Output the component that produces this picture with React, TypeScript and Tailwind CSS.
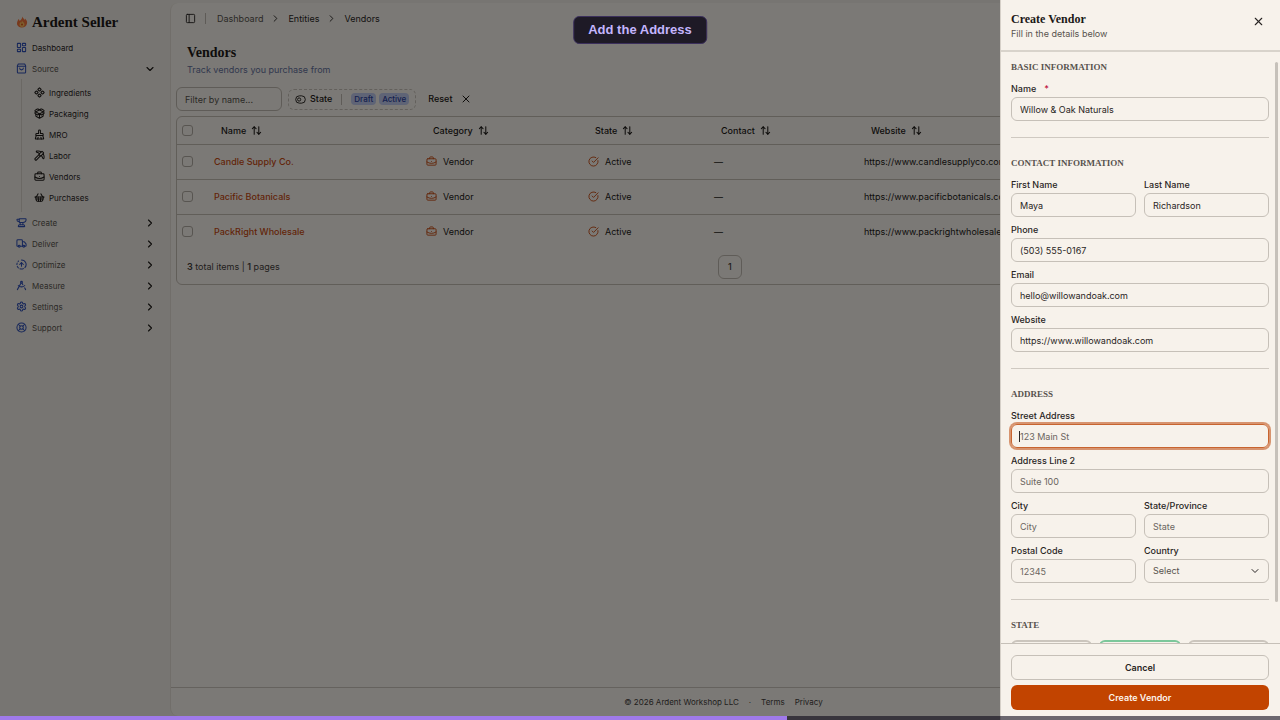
import type { ReactNode } from "react";
import {
  Anvil,
  ArrowUpDown,
  BriefcaseBusiness,
  BrushCleaning,
  ChevronDown,
  ChevronRight,
  CircleCheckBig,
  CircleFadingArrowUp,
  Component,
  DraftingCompass,
  LayoutDashboard,
  LifeBuoy,
  PackageOpen,
  PanelLeft,
  Pickaxe,
  Settings,
  ShoppingBasket,
  Truck,
  X,
  type LucideIcon,
} from "lucide-react";

interface NavItem {
  label: string;
  icon: LucideIcon;
}

interface Vendor {
  name: string;
  website: string;
}

const sourceItems: NavItem[] = [
  { label: "Ingredients", icon: Component },
  { label: "Packaging", icon: PackageOpen },
  { label: "MRO", icon: BrushCleaning },
  { label: "Labor", icon: Pickaxe },
  { label: "Vendors", icon: BriefcaseBusiness },
  { label: "Purchases", icon: ShoppingBasket },
];

const groups: NavItem[] = [
  { label: "Create", icon: Anvil },
  { label: "Deliver", icon: Truck },
  { label: "Optimize", icon: CircleFadingArrowUp },
  { label: "Measure", icon: DraftingCompass },
  { label: "Settings", icon: Settings },
  { label: "Support", icon: LifeBuoy },
];

const vendors: Vendor[] = [
  { name: "Candle Supply Co.", website: "https://www.candlesupplyco.com" },
  { name: "Pacific Botanicals", website: "https://www.pacificbotanicals.com" },
  { name: "PackRight Wholesale", website: "https://www.packrightwholesale.com" },
];

const columns = ["Name", "Category", "State", "Contact", "Website"];

const serif = "font-['Liberation_Serif',serif] font-bold";

function Flame() {
  return (
    <svg viewBox="0 0 24 24" className="size-3">
      <path
        d="M13 1c1 4 3 4 4 7 1-1 1-2 1-3 3 3 5 6 4 10-1 5-5 8-10 8S2 20 2 15c0-4 2-6 3-9 1 1 2 2 2 4 3-2 5-5 6-9z"
        fill="#f0733a"
      />
      <path
        d="M12 9c1 3 5 4 5 8 0 3-2 5-5 5s-5-2-5-5c0-2 1-3 2-5 1 1 1 1 1 2 1-1 2-3 2-5z"
        fill="#fbbf5a"
      />
      <circle cx="12" cy="17" r="2" fill="#d9541e" />
    </svg>
  );
}

function BagIcon() {
  return (
    <svg
      viewBox="0 0 24 24"
      className="size-[11px] text-[#2f4fb5]"
      fill="none"
      stroke="currentColor"
      strokeWidth="2.25"
      strokeLinecap="round"
      strokeLinejoin="round"
    >
      <path d="M5 2h14l2 4v14a2 2 0 0 1-2 2H5a2 2 0 0 1-2-2V6z" />
      <path d="M3 7h18" />
      <path d="M16 11a4 4 0 0 1-8 0" />
    </svg>
  );
}

function ToggleIcon() {
  return (
    <svg
      viewBox="0 0 24 24"
      className="size-[11px]"
      fill="none"
      stroke="currentColor"
      strokeWidth="2"
    >
      <rect x="1.5" y="4" width="21" height="16" rx="8" />
      <circle cx="9" cy="12" r="3.5" />
    </svg>
  );
}

function Sidebar() {
  return (
    <aside className="w-[170px] shrink-0 pt-3 pr-[14px] pl-4 text-[8px] text-[#57534e]">
      <a href="#" className={`flex h-5 items-center gap-1 text-[15px] text-[#1c1917] ${serif}`}>
        <Flame />
        Ardent Seller
      </a>
      <nav className="pt-[5px]">
        <a href="#" className="flex h-[21px] items-center gap-[5px] text-[#292524]">
          <LayoutDashboard strokeWidth={2.25} className="size-[11px] text-[#2f4fb5]" />
          Dashboard
        </a>
        <button className="flex h-[21px] w-full items-center gap-[5px]">
          <BagIcon />
          Source
          <ChevronDown strokeWidth={2.25} className="ml-auto size-3 text-[#1c1917]" />
        </button>
        <ul className="ml-[5px] border-l border-[#d6d0c8] pt-[3px] pb-1 pl-3">
          {sourceItems.map(({ label, icon: Icon }) => (
            <li key={label}>
              <a href="#" className="flex h-[21px] items-center gap-1 text-[#292524]">
                <Icon strokeWidth={2.25} className="size-[11px] text-[#1c1917]" />
                {label}
              </a>
            </li>
          ))}
        </ul>
        {groups.map(({ label, icon: Icon }) => (
          <button key={label} className="flex h-[21px] w-full items-center gap-[5px]">
            <Icon strokeWidth={2.25} className="size-[11px] text-[#2f4fb5]" />
            {label}
            <ChevronRight strokeWidth={2.25} className="ml-auto size-3 text-[#1c1917]" />
          </button>
        ))}
      </nav>
    </aside>
  );
}

function TopBar() {
  return (
    <header className="flex h-[31px] items-center px-[14px] text-[9px] text-[#292524]">
      <button aria-label="Toggle sidebar">
        <PanelLeft className="size-[11px]" />
      </button>
      <span className="ml-[9px] h-[11px] w-px bg-[#bdb7ae]" />
      <nav aria-label="Breadcrumb" className="ml-[11px] flex items-center gap-[7px]">
        <a href="#" className="text-[#57534e]">Dashboard</a>
        <ChevronRight className="size-[11px]" />
        <a href="#">Entities</a>
        <ChevronRight className="size-[11px]" />
        <span>Vendors</span>
      </nav>
    </header>
  );
}

function Filters() {
  return (
    <div className="flex h-6 items-center">
      <input
        aria-label="Filter by name"
        placeholder="Filter by name..."
        className="h-6 w-[106px] rounded-md border border-[#bfb9b0] px-2 text-[9px] placeholder:text-[#57534e]"
      />
      <button className="ml-[6px] flex h-[21px] items-center rounded-md border border-dashed border-[#c6c0b8] px-[6px] text-[9px] font-medium">
        <ToggleIcon />
        <span className="ml-1">State</span>
        <span className="mx-[9px] h-[11px] w-px bg-[#bfb9b0]" />
        <span className="flex gap-[3px] text-[8px] text-[#2a3f9c]">
          <span className="rounded-sm bg-[#bfc8ec] px-[3px]">Draft</span>
          <span className="rounded-sm bg-[#bfc8ec] px-[3px]">Active</span>
        </span>
      </button>
      <button className="ml-3 flex items-center gap-2 text-[9px] font-medium">
        Reset
        <X className="size-3" />
      </button>
    </div>
  );
}

function CheckCell({ label }: { label: string }) {
  return (
    <input
      type="checkbox"
      aria-label={label}
      className="block size-[11px] appearance-none rounded-[3px] border border-[#b0aaa2]"
    />
  );
}

function VendorTable() {
  return (
    <div className="mt-[5px] overflow-hidden rounded-md border border-[#c2bcb3]">
      <table className="w-full table-fixed text-left text-[9px]">
        <colgroup>
          <col className="w-8" />
          <col className="w-[212px]" />
          <col className="w-[162px]" />
          <col className="w-[126px]" />
          <col className="w-[150px]" />
          <col />
        </colgroup>
        <thead>
          <tr className="h-[27px] border-b border-[#c2bcb3]">
            <th className="px-[5px]">
              <CheckCell label="Select all" />
            </th>
            {columns.map(c => (
              <th key={c} className="px-3 font-medium">
                <button className="flex items-center gap-[5px]">
                  {c}
                  <ArrowUpDown strokeWidth={2.25} className="size-[11px]" />
                </button>
              </th>
            ))}
          </tr>
        </thead>
        <tbody>
          {vendors.map(v => (
            <tr key={v.name} className="h-[35px] border-b border-[#c2bcb3] last:border-b-0">
              <td className="px-[5px]">
                <CheckCell label={`Select ${v.name}`} />
              </td>
              <td className="px-[5px]">
                <a href="#" className="font-medium text-[#c64a12]">{v.name}</a>
              </td>
              <td className="px-[5px]">
                <span className="flex items-center gap-[6px]">
                  <BriefcaseBusiness className="size-[11px] text-[#c64a12]" />
                  Vendor
                </span>
              </td>
              <td className="px-[5px]">
                <span className="flex items-center gap-[6px]">
                  <CircleCheckBig className="size-[11px] text-[#c64a12]" />
                  Active
                </span>
              </td>
              <td className="px-[5px]">—</td>
              <td className="px-[5px] whitespace-nowrap">{v.website}</td>
            </tr>
          ))}
        </tbody>
      </table>
      <div className="flex h-[35px] items-center justify-between px-[10px] text-[9px] text-[#44403c]">
        <p>
          <b className="font-semibold">3</b> total items | <b className="font-semibold">1</b> pages
        </p>
        <button className="size-6 rounded-md border border-[#bfb9b0] font-medium">1</button>
        <div className="w-20" />
      </div>
    </div>
  );
}

function Field({ id, label, value, placeholder, required, focused }: {
  id: string;
  label: string;
  value?: string;
  placeholder?: string;
  required?: boolean;
  focused?: boolean;
}) {
  return (
    <div className="flex min-w-0 flex-1 flex-col gap-[2px]">
      <label htmlFor={id} className="text-[9px] leading-[13px] font-medium">
        {label}
        {required && <span className="ml-2 text-[#be123c]">*</span>}
      </label>
      <div className="relative">
        <input
          id={id}
          defaultValue={value}
          placeholder={placeholder}
          autoFocus={focused}
          className="block h-6 w-full rounded-md border border-[#c6c0b8] px-2 text-[9px] caret-transparent outline-none placeholder:text-[#6b6560] focus:border-[#c8642f] focus:ring-2 focus:ring-[#c2551c]/60"
        />
        {/* steady caret, the native one blinks */}
        {focused && <span className="absolute top-[7px] left-2 h-[11px] w-px bg-[#292524]" />}
      </div>
    </div>
  );
}

function Section({ title, children }: { title: string; children?: ReactNode }) {
  return (
    <section className="border-b border-[#cfc9c1] pt-[18px] pb-4 first:pt-2 last:border-b-0">
      <h3 className={`mb-2 text-[9px] leading-[14px] text-[#57534e] uppercase ${serif}`}>{title}</h3>
      <div className="flex flex-col gap-[6px]">{children}</div>
    </section>
  );
}

function CreateVendorPanel() {
  return (
    <div
      role="dialog"
      aria-labelledby="panel-title"
      className="fixed inset-y-0 right-0 flex w-[280px] flex-col border-l border-[#d6d0c8] bg-[#f7f2eb] text-[#292524]"
    >
      <div className="flex h-[52px] shrink-0 items-start justify-between border-b-2 border-[#d8d3cb] pt-3 pr-[11px] pl-[10px]">
        <div>
          <h2 id="panel-title" className={`text-[12px] leading-[14px] text-[#1c1917] ${serif}`}>Create Vendor</h2>
          <p className="text-[9px] leading-[15px] text-[#57534e]">Fill in the details below</p>
        </div>
        <button aria-label="Close" className="mt-[3px] mr-1">
          <X className="size-[13px]" />
        </button>
      </div>

      <form className="relative min-h-0 flex-1 overflow-hidden pr-[11px] pl-[10px]">
        <Section title="Basic Information">
          <Field id="name" label="Name" value="Willow & Oak Naturals" required />
        </Section>
        <Section title="Contact Information">
          <div className="flex gap-2">
            <Field id="first" label="First Name" value="Maya" />
            <Field id="last" label="Last Name" value="Richardson" />
          </div>
          <Field id="phone" label="Phone" value="(503) 555-0167" />
          <Field id="email" label="Email" value="hello@willowandoak.com" />
          <Field id="website" label="Website" value="https://www.willowandoak.com" />
        </Section>
        <Section title="Address">
          <Field id="street" label="Street Address" placeholder="123 Main St" focused />
          <Field id="line2" label="Address Line 2" placeholder="Suite 100" />
          <div className="flex gap-2">
            <Field id="city" label="City" placeholder="City" />
            <Field id="province" label="State/Province" placeholder="State" />
          </div>
          <div className="flex gap-2">
            <Field id="postal" label="Postal Code" placeholder="12345" />
            <div className="flex min-w-0 flex-1 flex-col gap-[2px]">
              <label htmlFor="country" className="text-[9px] leading-[13px] font-medium">Country</label>
              <div className="relative">
                <select
                  id="country"
                  className="block h-6 w-full appearance-none rounded-md border border-[#c6c0b8] px-2 text-[9px] text-[#57534e]"
                >
                  <option>Select</option>
                </select>
                <ChevronDown className="pointer-events-none absolute top-[6px] right-2 size-3" />
              </div>
            </div>
          </div>
        </Section>
        <Section title="State">
          <div className="grid grid-cols-3 gap-[7px]">
            <button type="button" aria-label="Draft" className="h-6 rounded-md border-2 border-[#cbc5bd]" />
            <button type="button" aria-label="Active" className="h-6 rounded-md border-2 border-[#7cc79b]" />
            <button type="button" aria-label="Archived" className="h-6 rounded-md border-2 border-[#cbc5bd]" />
          </div>
        </Section>
        {/* scrollbar thumb */}
        <span className="absolute top-[10px] right-[2px] h-[540px] w-[3px] rounded-full bg-[#c6c1ba]" />
      </form>

      <div className="flex shrink-0 flex-col gap-[5px] border-t border-[#c6c0b8] pt-[11px] pr-[11px] pb-[10px] pl-[10px] text-[9px]">
        <button className="h-[25px] rounded-md border border-[#c6c0b8] font-semibold">Cancel</button>
        <button className="h-[25px] rounded-md bg-[#c24400] font-semibold text-[#fdf3ea]">Create Vendor</button>
      </div>
    </div>
  );
}

export default function App() {
  return (
    <div className="min-h-screen bg-[#efebe4] font-['Inter',sans-serif] text-[#1c1917]">
      <div className="flex min-h-screen">
        <Sidebar />
        <main className="mt-[3px] mr-1 mb-1 flex min-w-0 flex-1 flex-col rounded-lg border-l border-[#e2ddd5] bg-[#f7f3ec]">
          <TopBar />
          <div className="flex-1 px-[5px] pt-[10px]">
            <h1 className={`px-[11px] text-[14px] leading-[18px] ${serif}`}>Vendors</h1>
            <p className="px-[11px] pb-[9px] text-[9px] leading-4 text-[#64709c]">Track vendors you purchase from</p>
            <Filters />
            <VendorTable />
          </div>
          <footer className="flex h-[29px] items-center justify-center border-t border-[#cbc5bc] text-[8px] text-[#44403c]">
            <span>© 2026 Ardent Workshop LLC</span>
            <span className="mx-[10px]">·</span>
            <a href="#">Terms</a>
            <a href="#" className="ml-[10px]">Privacy</a>
          </footer>
        </main>
      </div>

      <div className="fixed inset-0 bg-black/50" />
      <CreateVendorPanel />

      {/* walkthrough caption and progress */}
      <div className="fixed top-4 left-1/2 -translate-x-1/2 rounded-md border border-[#3b2f5c] bg-[#1e1a26] px-[14px] py-1 font-['Liberation_Sans',sans-serif] text-[13px] leading-[18px] font-bold whitespace-nowrap text-[#c4b5fd]">
        Add the Address
      </div>
      <div className="fixed inset-x-0 bottom-0 h-1 bg-[#0f0a1a]/60">
        <div className="h-full bg-[#9f7aea]" style={{ width: "61.5%" }} />
      </div>
    </div>
  );
}
